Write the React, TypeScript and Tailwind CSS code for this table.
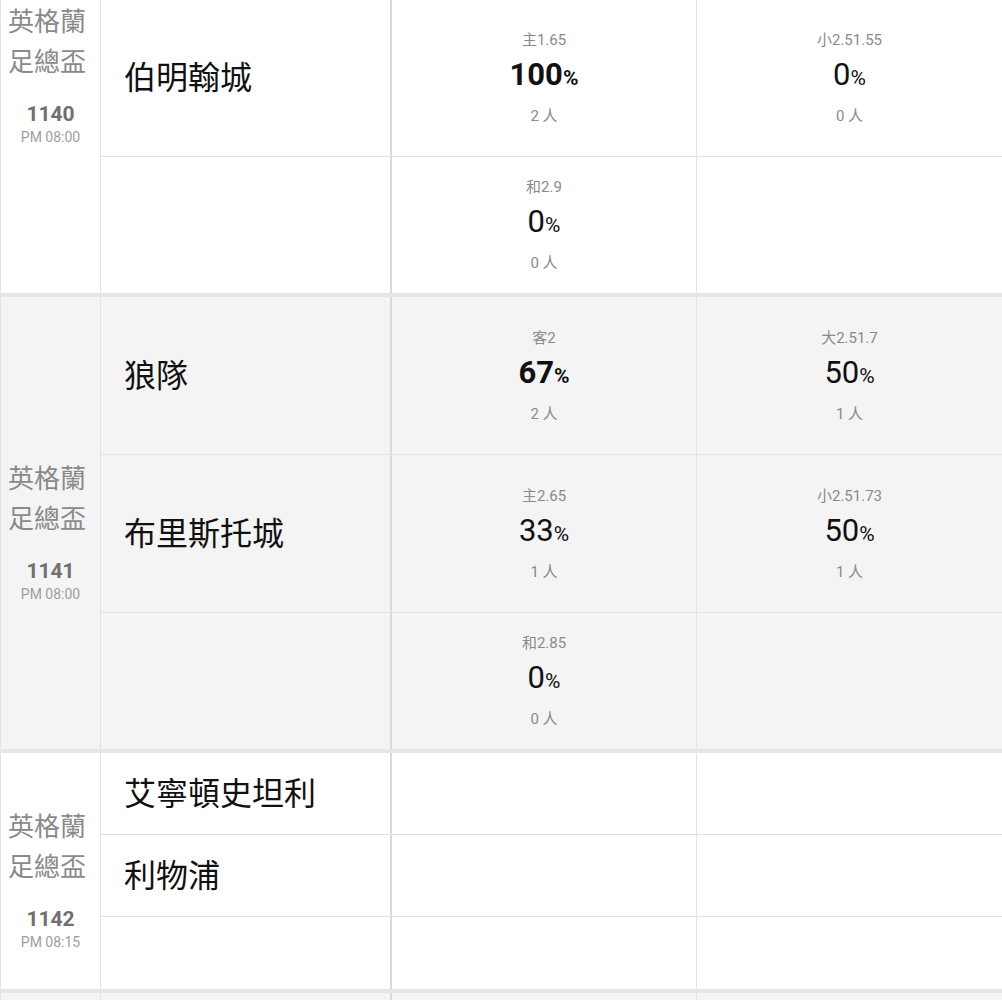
type Odd = { label: string; pct: number; count: number; bold?: boolean };

type Row = {
  team?: string;
  home?: Odd;
  away?: Odd;
  height: string;
};

type Match = {
  league: string;
  no: string;
  time: string;
  shade?: boolean;
  top?: boolean;
  rows: Row[];
};

const matches: Match[] = [
  {
    league: "英格蘭足總盃",
    no: "1140",
    time: "PM 08:00",
    top: true,
    rows: [
      {
        team: "伯明翰城",
        home: { label: "主1.65", pct: 100, count: 2, bold: true },
        away: { label: "小2.51.55", pct: 0, count: 0 },
        height: "h-[158px]",
      },
      { home: { label: "和2.9", pct: 0, count: 0 }, height: "h-[136px]" },
    ],
  },
  {
    league: "英格蘭足總盃",
    no: "1141",
    time: "PM 08:00",
    shade: true,
    rows: [
      {
        team: "狼隊",
        home: { label: "客2", pct: 67, count: 2, bold: true },
        away: { label: "大2.51.7", pct: 50, count: 1 },
        height: "h-[158px]",
      },
      {
        team: "布里斯托城",
        home: { label: "主2.65", pct: 33, count: 1 },
        away: { label: "小2.51.73", pct: 50, count: 1 },
        height: "h-[158px]",
      },
      { home: { label: "和2.85", pct: 0, count: 0 }, height: "h-[136px]" },
    ],
  },
  {
    league: "英格蘭足總盃",
    no: "1142",
    time: "PM 08:15",
    rows: [
      { team: "艾寧頓史坦利", height: "h-[82px]" },
      { team: "利物浦", height: "h-[82px]" },
      { height: "h-[72px]" },
    ],
  },
  {
    // next match, only its top edge is on screen
    league: "",
    no: "",
    time: "",
    shade: true,
    rows: [{ height: "h-[82px]" }, { height: "h-[82px]" }],
  },
];

const OddCell = ({ odd }: { odd?: Odd }) => (
  <div className="flex flex-col items-center justify-center">
    {odd && (
      <>
        <div className="text-[15px] leading-[20px] text-[#8a8a8a]">{odd.label}</div>
        <div
          className={`mt-[7px] text-[31px] leading-[36px] text-[#111] ${odd.bold ? "font-bold" : "font-normal"}`}
        >
          {odd.pct}
          <span className="text-[21px]">%</span>
        </div>
        <div className="mt-[10px] text-[15px] leading-[20px] text-[#8a8a8a]">
          {odd.count} 人
        </div>
      </>
    )}
  </div>
);

const App = () => {
  return (
    <div
      className="h-[1000px] w-[1002px] overflow-hidden bg-white"
      style={{ fontFamily: "Roboto, 'Noto Sans CJK TC', sans-serif" }}
    >
      <div className="-mt-[1px]">
        {matches.map((match, idx) => (
          <div
            key={idx}
            className={`flex border-b-4 border-[#e6e6e6] ${match.shade ? "bg-[#f4f4f4]" : "bg-white"}`}
          >
            {/* League / number / time */}
            <div
              className={`flex w-[101px] shrink-0 flex-col border-x border-[#e2e2e2] ${
                match.top ? "justify-start pt-[3px]" : "justify-center pt-[15px]"
              }`}
            >
              {match.no && (
                <>
                  <div className="ml-[7px] w-[80px] text-[26px] leading-[40px] text-[#8a8a8a]">
                    {match.league}
                  </div>
                  <div className="mt-[20px] text-center text-[21px] font-bold leading-[24px] text-[#707070]">
                    {match.no}
                  </div>
                  <div className="mt-[3px] text-center text-[14px] leading-[16px] text-[#9e9e9e]">
                    {match.time}
                  </div>
                </>
              )}
            </div>

            {/* Team + odds rows */}
            <div className="flex flex-1 flex-col">
              {match.rows.map((row, i) => (
                <div
                  key={i}
                  className={`grid grid-cols-[289px_2px_304px_1px_1fr] ${row.height} ${
                    i < match.rows.length - 1 ? "border-b border-[#e2e2e2]" : ""
                  }`}
                >
                  <div className="flex items-center pl-[23px] text-[32px] text-[#111]">
                    {row.team}
                  </div>
                  <div className="bg-[#d9d9d9]" />
                  <OddCell odd={row.home} />
                  <div className="bg-[#e4e4e4]" />
                  <OddCell odd={row.away} />
                </div>
              ))}
            </div>
          </div>
        ))}
      </div>
    </div>
  );
};

export default App;
